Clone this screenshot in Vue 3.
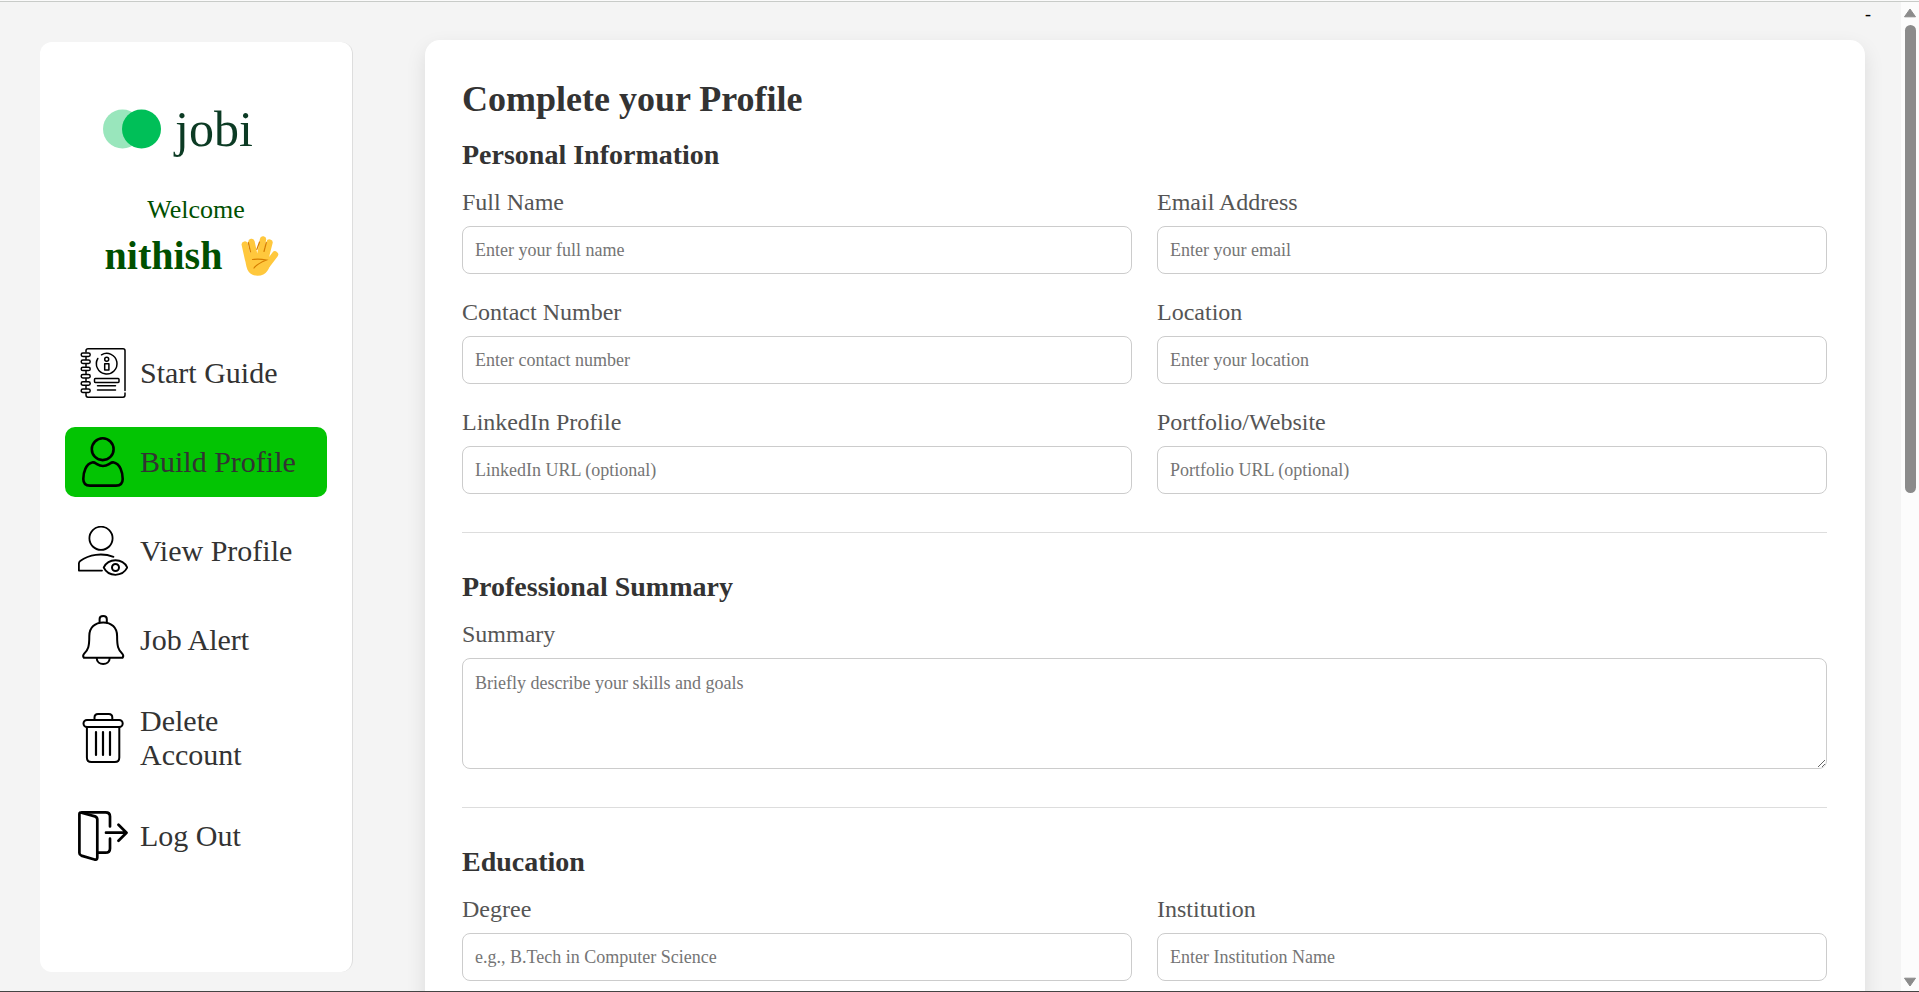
<script setup>
import { ref } from 'vue'

const navItems = [
  { id: 'guide', label: 'Start Guide' },
  { id: 'build', label: 'Build Profile' },
  { id: 'view', label: 'View Profile' },
  { id: 'alert', label: 'Job Alert' },
  { id: 'delete', label: 'Delete Account' },
  { id: 'logout', label: 'Log Out' }
]
const active = ref('build')

const sections = [
  {
    title: 'Personal Information',
    fields: [
      { id: 'full-name', label: 'Full Name', placeholder: 'Enter your full name', type: 'text' },
      { id: 'email', label: 'Email Address', placeholder: 'Enter your email', type: 'email' },
      { id: 'contact', label: 'Contact Number', placeholder: 'Enter contact number', type: 'tel' },
      { id: 'location', label: 'Location', placeholder: 'Enter your location', type: 'text' },
      { id: 'linkedin', label: 'LinkedIn Profile', placeholder: 'LinkedIn URL (optional)', type: 'url' },
      { id: 'portfolio', label: 'Portfolio/Website', placeholder: 'Portfolio URL (optional)', type: 'url' }
    ]
  },
  {
    title: 'Professional Summary',
    fields: [
      { id: 'summary', label: 'Summary', placeholder: 'Briefly describe your skills and goals', type: 'area' }
    ]
  },
  {
    title: 'Education',
    fields: [
      { id: 'degree', label: 'Degree', placeholder: 'e.g., B.Tech in Computer Science', type: 'text' },
      { id: 'institution', label: 'Institution', placeholder: 'Enter Institution Name', type: 'text' }
    ]
  }
]
</script>

<template>
  <div class="shell">
    <div class="page">
      <aside class="sidebar">
        <div class="logo">
          <svg width="58" height="40" viewBox="0 0 58 40" aria-hidden="true">
            <circle cx="19.5" cy="20" r="19.5" fill="#99e6bc" />
            <circle cx="38.5" cy="20" r="19.5" fill="#00bf58" />
          </svg>
          <span class="brand">jobi</span>
        </div>
        <p class="welcome">Welcome</p>
        <h2 class="user">
          <span>nithish</span>
          <svg width="55" height="44" viewBox="0 0 55 44" aria-hidden="true">
            <g fill="none" stroke="#ffc83d" stroke-width="6.4" stroke-linecap="round">
              <path d="M12.800 10.500 16 25" />
              <path d="M19.500 8 22.500 22" />
              <path d="M31 5.500 28 22" />
              <path d="M37.500 8.500 33.500 24" />
              <path d="M43 20.500 35 31" />
            </g>
            <path d="M12.800 19 21 18.500 25.500 19.500 29 17.500 36.600 18 38 27C39 31 36 41.700 25.500 41.700 15.500 41.700 13.500 34 12.800 19Z" fill="#ffc83d" />
            <path d="M16.300 8.500 18.500 18M34.300 8.500 32 17.500M24.800 15.500 27.500 8M20.500 25.500C25 24.700 29.500 25 34.500 26 29.500 28 25 30 22 34" fill="none" stroke="#d67d00" stroke-width="1.200" stroke-linecap="round" />
          </svg>
        </h2>
        <nav class="nav" aria-label="Main">
          <a
            v-for="item in navItems"
            :key="item.id"
            href="#"
            class="nav-item"
            :class="{ active: item.id === active }"
            @click.prevent="active = item.id"
          >
            <svg class="icon" viewBox="0 0 50 50" aria-hidden="true">
              <g v-if="item.id === 'guide'" stroke-width="1.5">
                <path d="M8 4V2.500Q8 .8 10 .8H45Q47 .8 47 2.800V42.500M47 45V47Q47 49.200 45 49.200H10Q8 49.200 8 47V45" />
                <path d="M8 9V11.500M8 16V18.500M8 23V26M8 30.500V33.500M8 38V40.500" />
                <rect v-for="y in [5, 12, 19.2, 26.5, 33.8, 41]" :key="y" x="3.200" :y="y" width="9" height="3.400" rx="1.700" />
                <path d="M23.500 6.800A10.300 10.300 0 1 1 19.800 10.500" />
                <circle cx="28.700" cy="11.200" r="2" />
                <rect x="26.700" y="15.700" width="4.200" height="6.300" />
                <rect x="16.500" y="30.600" width="24.500" height="3.800" rx=".8" />
                <path d="M19.500 37.700H37.500M19.500 42H37.500" />
              </g>
              <g v-else-if="item.id === 'build'" stroke-width="2.600">
                <circle cx="24.700" cy="12.200" r="10.900" />
                <path d="M14 25.500C8 27 5.300 35 5.300 42 5.300 46.500 8 48.600 12 48.600H38C42 48.600 44.700 46.500 44.700 42 44.700 35 42 27 36 25.500 33.500 24.800 32.500 26.300 31 27.200Q25 30.800 19 27.200C17.500 26.300 16.500 24.800 14 25.500Z" />
              </g>
              <g v-else-if="item.id === 'view'" stroke-width="1.800">
                <circle cx="23" cy="12.300" r="11.600" />
                <path d="M35.500 30.800C24 26.500 11 28.500 2.200 35Q.9 36 .9 37.500V44.600H24" />
                <path d="M25.700 41.500C30.500 31.800 44.500 31.800 49.300 41.500 44.500 51.200 30.500 51.200 25.700 41.500Z" />
                <circle cx="37.500" cy="41.500" r="3.500" stroke-width="2" />
              </g>
              <g v-else-if="item.id === 'alert'" stroke-width="2">
                <path d="M21.600 7.500V4Q21.600 1 25.200 1 28.800 1 28.800 4V7.500" />
                <path d="M11.300 21C11.300 12.500 17 7.400 25.200 7.400 33.400 7.400 39.100 12.500 39.100 21 39.100 31 40 35 44.500 39Q46 41 44.500 42.800H5.900Q4.400 41 5.900 39C10.400 35 11.300 31 11.300 21Z" />
                <path d="M18.700 43C18.700 51 31.700 51 31.700 43" />
              </g>
              <g v-else-if="item.id === 'delete'" stroke-width="2">
                <path d="M16.500 7V4.500Q16.500 1 20 1H30.800Q34.300 1 34.300 4.500V7" />
                <rect x="5.500" y="7" width="39.200" height="7" rx="3.500" />
                <path d="M8.900 14V44.500Q8.900 49 13.400 49H36.800Q41.300 49 41.300 44.500V14" />
                <path d="M18 19V42M25 19V42M32 19V42" stroke-width="2.200" />
              </g>
              <g v-else stroke-width="2.700">
                <path d="M4 1.400H27.500Q32 1.400 32 5.500V15.500M32 27.700V37.500Q32 41.700 27.500 41.700H20" />
                <path d="M3.500 1.700 17 5.400Q19.300 6.200 19.300 8.500V46.500Q19.300 49.300 16.500 48.500L3.300 44.600Q1.400 43.900 1.400 42V3Q1.400 1 3.500 1.700Z" />
                <path d="M28 21.700H48.300M40.500 13.700 48.500 21.700 40.500 29.800" />
              </g>
            </svg>
            <span>{{ item.label }}</span>
          </a>
        </nav>
      </aside>

      <main class="main">
        <div class="topline">-</div>
        <form class="panel" @submit.prevent>
          <h1>Complete your Profile</h1>
          <section v-for="section in sections" :key="section.title">
            <h2>{{ section.title }}</h2>
            <div class="fields">
              <div v-for="f in section.fields" :key="f.id" class="field" :class="{ wide: f.type === 'area' }">
                <label :for="f.id">{{ f.label }}</label>
                <textarea v-if="f.type === 'area'" :id="f.id" :placeholder="f.placeholder"></textarea>
                <input v-else :id="f.id" :type="f.type" :placeholder="f.placeholder" />
              </div>
            </div>
          </section>
        </form>
      </main>
    </div>

    <div class="scrollbar" aria-hidden="true">
      <svg width="14" height="10" viewBox="0 0 14 10"><path d="M7 1 12.500 8.800H1.500Z" /></svg>
      <div class="track"><div class="thumb"></div></div>
      <svg width="14" height="10" viewBox="0 0 14 10"><path d="M7 9 1.500 1.200H12.500Z" /></svg>
    </div>
  </div>
</template>

<style>
body {
  margin: 0;
  background: #f4f4f4;
}
</style>

<style scoped>
.shell {
  box-sizing: border-box;
  display: flex;
  height: 100vh;
  overflow: hidden;
  border-bottom: 1px solid #444;
  background: #f4f4f4;
  box-shadow: inset 0 1px #fafafa, inset 0 2px #c8cbc8;
  font-family: "Liberation Serif", "Times New Roman", serif;
}
.page {
  display: flex;
  flex: 1;
  min-width: 0;
  gap: 72px;
  padding: 2px 36px 0 40px;
}
.sidebar {
  box-sizing: border-box;
  flex: none;
  width: 313px;
  margin: 40px 0 19px;
  padding: 64px 25px 0;
  border-right: 1px solid #ddd;
  border-radius: 12px;
  background: #fff;
}
.logo {
  display: flex;
  align-items: center;
  gap: 14px;
  height: 46px;
  padding-left: 38px;
}
.brand {
  color: #0c3b24;
  font-size: 50px;
  line-height: 46px;
}
.welcome {
  margin: 43px 0 0;
  color: #005000;
  font-size: 26px;
  line-height: 30px;
  text-align: center;
}
.user {
  display: flex;
  align-items: center;
  justify-content: center;
  gap: 10px;
  margin: 8px 0 0;
  color: #005000;
  font-size: 40px;
  line-height: 46px;
}
.nav {
  display: flex;
  flex-direction: column;
  gap: 19px;
  margin-top: 59px;
}
.nav-item {
  display: flex;
  align-items: center;
  gap: 12px;
  padding: 10px 13px;
  border-radius: 10px;
  color: #333;
  font-size: 30px;
  line-height: 34px;
  text-decoration: none;
}
.nav-item.active {
  background: #03c403;
}
.icon {
  flex: none;
  width: 50px;
  height: 50px;
  fill: none;
  stroke: #000;
  stroke-linecap: round;
  stroke-linejoin: round;
}
.main {
  flex: 1;
  min-width: 0;
}
.topline {
  height: 38px;
  margin-right: -6px;
  font-size: 18px;
  line-height: 24px;
  text-align: right;
}
.panel {
  padding: 38px 38px 60px 37px;
  border-radius: 15px;
  background: #fff;
  box-shadow: 0 8px 20px rgba(0, 0, 0, 0.1);
}
h1 {
  margin: 0 0 18px;
  color: #333;
  font-size: 36px;
  line-height: 42px;
}
section + section {
  margin-top: 38px;
  padding-top: 37px;
  border-top: 1px solid #ddd;
}
section h2 {
  margin: 0 0 16px;
  color: #333;
  font-size: 28px;
  line-height: 34px;
}
.fields {
  display: grid;
  grid-template-columns: 1fr 1fr;
  gap: 24px 25px;
}
.field {
  display: flex;
  flex-direction: column;
  gap: 10px;
  min-width: 0;
}
.wide {
  grid-column: 1 / -1;
}
label {
  color: #555;
  font-size: 24px;
  line-height: 28px;
}
input,
textarea {
  box-sizing: border-box;
  width: 100%;
  margin: 0;
  padding: 12px;
  border: 1px solid #ccc;
  border-radius: 8px;
  background: #fff;
  font-family: inherit;
  font-size: 18px;
  line-height: 24px;
}
input {
  height: 48px;
}
textarea {
  display: block;
  height: 111px;
  resize: vertical;
}
.scrollbar {
  display: flex;
  flex: none;
  flex-direction: column;
  align-items: center;
  gap: 7px;
  width: 18px;
  margin-top: 2px;
  padding: 6px 0 4px;
  box-sizing: border-box;
  background: #fcfcfc;
}
.scrollbar svg {
  flex: none;
  fill: #8b8b8b;
  stroke: #8b8b8b;
  stroke-linejoin: round;
}
.track {
  flex: 1;
  width: 11px;
}
.thumb {
  height: 49.5%;
  border-radius: 6px;
  background: #8b8b8b;
}
</style>
